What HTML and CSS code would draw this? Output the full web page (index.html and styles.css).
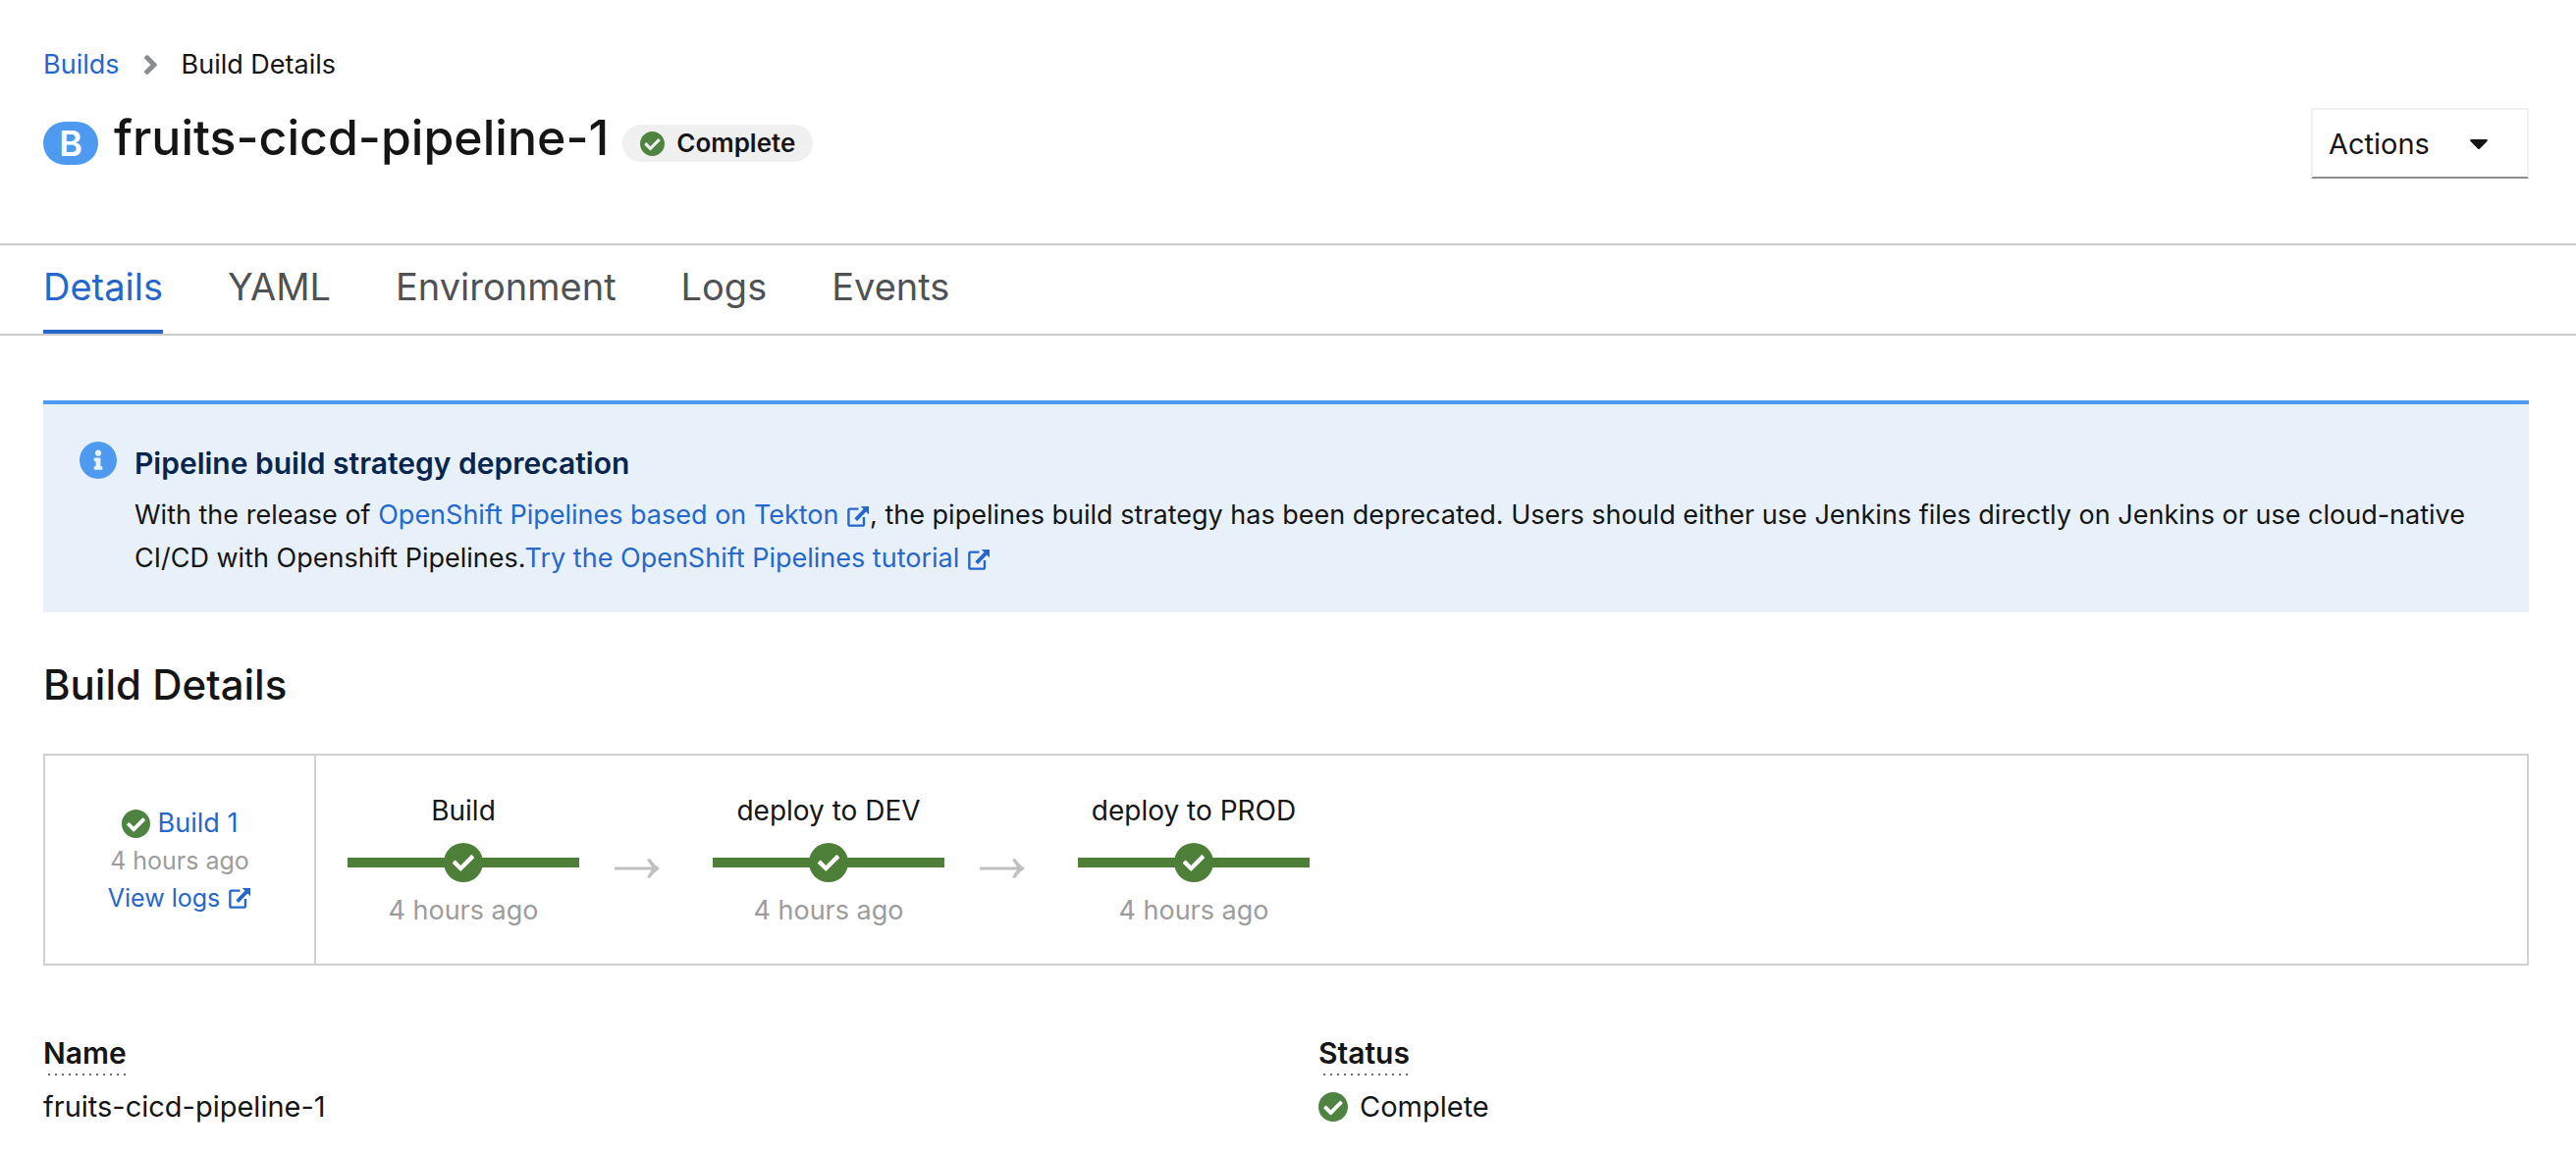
FILE: index.html
```html
<!DOCTYPE html>
<html lang="en">
<head>
<meta charset="utf-8">
<title>fruits-cicd-pipeline-1 · Build Details</title>
<link rel="stylesheet" href="styles.css">
</head>
<body>
<svg class="sprite" aria-hidden="true">
  <symbol id="check-circle" viewBox="8 8 496 496"><path d="M504 256c0 136.967-111.033 248-248 248S8 392.967 8 256 119.033 8 256 8s248 111.033 248 248zM227.314 387.314l184-184c6.248-6.248 6.248-16.379 0-22.627l-22.627-22.627c-6.248-6.249-16.379-6.249-22.628 0L216 308.118l-70.059-70.059c-6.248-6.248-16.379-6.248-22.628 0l-22.627 22.627c-6.248 6.248-6.248 16.379 0 22.627l104 104c6.249 6.249 16.379 6.249 22.628.001z"/></symbol>
  <symbol id="tick" viewBox="96 153 320 240"><path d="M227.314 387.314l184-184c6.248-6.248 6.248-16.379 0-22.627l-22.627-22.627c-6.248-6.249-16.379-6.249-22.628 0L216 308.118l-70.059-70.059c-6.248-6.248-16.379-6.248-22.628 0l-22.627 22.627c-6.248 6.248-6.248 16.379 0 22.627l104 104c6.249 6.249 16.379 6.249 22.628.001z"/></symbol>
  <symbol id="long-arrow" viewBox="0 0 46 26"><path d="M0 11.500H38Q35 7 33 4L36 3Q40 9 46 13Q40 17 36 23L33 22Q35 18 38 14.500H0Z"/></symbol>
  <symbol id="external" viewBox="0 0 24 24"><path d="M12.500 4H3Q1.500 4 1.500 5.500V21Q1.500 22.500 3 22.500H17Q18.500 22.500 18.500 21V13" fill="none" stroke="currentColor" stroke-width="2.600"/><path d="M15 1H24V10L21 7L11 17.500L8 14.500L18 4Z"/></symbol>
</svg>
<header class="page-header">
  <nav class="breadcrumb" aria-label="Breadcrumb">
    <a href="#">Builds</a>
    <svg class="chevron" viewBox="25 96 207 320"><path d="M224.300 273l-136 136c-9.400 9.400-24.600 9.400-33.900 0l-22.600-22.600c-9.400-9.400-9.400-24.600 0-33.900l96.400-96.400-96.400-96.400c-9.400-9.400-9.400-24.600 0-33.900L54.300 103c9.400-9.400 24.600-9.400 33.900 0l136 136c9.500 9.400 9.500 24.600.1 34z"/></svg>
    <span>Build Details</span>
  </nav>
  <div class="title-row">
    <span class="kind">B</span>
    <h1>fruits-cicd-pipeline-1</h1>
    <span class="pill"><svg class="check-sm"><use href="#check-circle"/></svg>Complete</span>
    <button class="actions" type="button">Actions<svg class="caret" viewBox="11 192 298 169"><path d="M31.300 192h257.300c17.800 0 26.700 21.500 14.100 34.100L174.100 354.800c-7.800 7.800-20.500 7.800-28.300 0L17.200 226.100C4.600 213.500 13.500 192 31.300 192z"/></svg></button>
  </div>
</header>
<nav class="tabs" aria-label="Sections">
  <a class="tab active" href="#">Details</a>
  <a class="tab" href="#">YAML</a>
  <a class="tab" href="#">Environment</a>
  <a class="tab" href="#">Logs</a>
  <a class="tab" href="#">Events</a>
</nav>
<main>
  <section class="alert">
    <svg class="info" viewBox="8 8 496 496"><path d="M256 8C119.043 8 8 119.083 8 256c0 136.997 111.043 248 248 248s248-111.003 248-248C504 119.083 392.957 8 256 8zm0 110c23.196 0 42 18.804 42 42s-18.804 42-42 42-42-18.804-42-42 18.804-42 42-42zm56 254c0 6.627-5.373 12-12 12h-88c-6.627 0-12-5.373-12-12v-24c0-6.627 5.373-12 12-12h12v-64h-12c-6.627 0-12-5.373-12-12v-24c0-6.627 5.373-12 12-12h64c6.627 0 12 5.373 12 12v100h12c6.627 0 12 5.373 12 12v24z"/></svg>
    <div>
      <h2 class="alert-title">Pipeline build strategy deprecation</h2>
      <p>With the release of <a href="#">OpenShift Pipelines based on Tekton <svg class="ext"><use href="#external"/></svg></a>, the pipelines build strategy has been deprecated. Users should either use Jenkins files directly on Jenkins or use cloud-native CI/CD with Openshift Pipelines.<a href="#">Try the OpenShift Pipelines tutorial <svg class="ext"><use href="#external"/></svg></a></p>
    </div>
  </section>
  <h2 class="section-title">Build Details</h2>
  <section class="pipeline">
    <div class="summary">
      <div class="summary-name"><svg class="check-md"><use href="#check-circle"/></svg><a href="#">Build 1</a></div>
      <div class="summary-time">4 hours ago</div>
      <a class="summary-logs" href="#">View logs<svg class="ext"><use href="#external"/></svg></a>
    </div>
    <ol class="stages">
      <li class="stage"><span class="stage-name">Build</span><div class="bar"><span class="dot"><svg><use href="#tick"/></svg></span></div><span class="stage-time">4 hours ago</span></li>
      <li class="arrow"><svg><use href="#long-arrow"/></svg></li>
      <li class="stage"><span class="stage-name">deploy to DEV</span><div class="bar"><span class="dot"><svg><use href="#tick"/></svg></span></div><span class="stage-time">4 hours ago</span></li>
      <li class="arrow"><svg><use href="#long-arrow"/></svg></li>
      <li class="stage"><span class="stage-name">deploy to PROD</span><div class="bar"><span class="dot"><svg><use href="#tick"/></svg></span></div><span class="stage-time">4 hours ago</span></li>
    </ol>
  </section>
  <dl class="facts">
    <div><dt><span>Name</span></dt><dd>fruits-cicd-pipeline-1</dd></div>
    <div><dt><span>Status</span></dt><dd><svg class="check-lg"><use href="#check-circle"/></svg>Complete</dd></div>
  </dl>
</main>
</body>
</html>
```

FILE: styles.css
```css
* { box-sizing: border-box; }
body { margin: 0; background: #fff; color: #151515; font: 27px/44px Inter, "Noto Sans", sans-serif; }
a { color: #2567cc; text-decoration: none; }
svg { flex: none; fill: currentColor; }
h1, h2, p, ol, dl, dd { margin: 0; padding: 0; }
.sprite { display: none; }

.page-header { padding: 44px 48px 66px 44px; }
.breadcrumb { display: flex; align-items: center; gap: 25px; }
.chevron { width: 13px; height: 20px; color: #8a8d90; }
.title-row { display: flex; align-items: center; gap: 16px; padding-top: 22px; }
.kind { width: 56px; height: 44px; border-radius: 22px; background: #4e9af0; color: #fff; font-size: 36px; font-weight: 600; text-align: center; }
h1 { padding-bottom: 12px; font-size: 50px; line-height: 60px; font-weight: 500; }
.title-row h1 { margin-right: -2px; }
.pill { display: flex; align-items: center; gap: 12px; height: 38px; padding: 0 18px; border-radius: 19px; background: #f0f0f0; font-size: 26px; font-weight: 600; }
.check-sm, .check-md, .check-lg { color: #4f8340; }
.check-sm { width: 25px; height: 25px; }
.check-md { width: 29px; height: 29px; }
.check-lg { width: 30px; height: 30px; }
.actions { display: flex; align-items: center; justify-content: space-between; width: 222px; height: 72px; margin-left: auto; padding: 2px 40px 0 16px; border: 2px solid #f0f0f0; border-bottom-color: #8a8d90; background: #fff; color: inherit; font: inherit; font-size: 29px; }
.caret { width: 18px; height: 10px; }

.tabs { display: flex; gap: 66px; height: 94px; padding: 0 44px; border-top: 2px solid #ccc; border-bottom: 2px solid #ccc; font-size: 38px; }
.tab { padding-top: 20px; border-bottom: 4px solid transparent; color: #4f5255; }
.tab.active { border-color: #2567cc; color: #2567cc; }

main { padding: 66px 48px 0 44px; }
.alert { display: flex; gap: 18px; padding: 38px 48px 33px 37px; border-top: 4px solid #4e9af0; background: #e8f1f9; }
.info { width: 38px; height: 38px; color: #4e9af0; }
.alert-title { margin-bottom: 9px; color: #06264f; font-size: 30px; font-weight: 600; line-height: 44px; }
.ext { width: 24px; height: 22px; vertical-align: -3px; }
.section-title { padding: 52px 0 48px; font-size: 42px; font-weight: 500; line-height: 44px; }
.pipeline { display: flex; min-height: 216px; border: 2px solid #d1d1d1; }
.summary { display: flex; flex-direction: column; align-items: center; justify-content: center; width: 276px; padding-top: 2px; border-right: 2px solid #d1d1d1; font-size: 25px; line-height: 38px; }
.summary-name { display: flex; align-items: center; gap: 8px; font-size: 27px; }
.summary-time, .stage-time { color: #9c9c9c; }
.summary-logs { display: flex; align-items: center; gap: 8px; }
.stages { display: flex; align-items: center; padding: 2px 32px 0; list-style: none; }
.stage { display: flex; flex-direction: column; align-items: center; width: 236px; white-space: nowrap; }
.stage-name { font-size: 28px; }
.bar { display: flex; align-items: center; justify-content: center; width: 100%; height: 10px; margin: 26px 0 22px; background: #4d7f39; }
.dot { display: flex; flex: none; align-items: center; justify-content: center; width: 40px; height: 40px; border-radius: 50%; background: #4d7f39; color: #fff; }
.dot svg { width: 22px; height: 17px; }
.arrow { display: flex; width: 136px; padding: 16px 0 0 36px; }
.arrow svg { width: 46px; height: 26px; color: #c0c0c0; }
.facts { display: grid; grid-template-columns: 1fr 1fr; gap: 66px; padding-top: 68px; }
.facts dt { display: flex; font-size: 30px; font-weight: 600; line-height: 42px; }
.facts dt span::after { content: ""; display: block; height: 2px; margin: 0 0 2px 5px; background: repeating-linear-gradient(90deg, #6a6e73 0 2px, transparent 2px 7px); }
.facts dd { display: flex; align-items: center; gap: 12px; font-size: 29px; line-height: 60px; }
```
